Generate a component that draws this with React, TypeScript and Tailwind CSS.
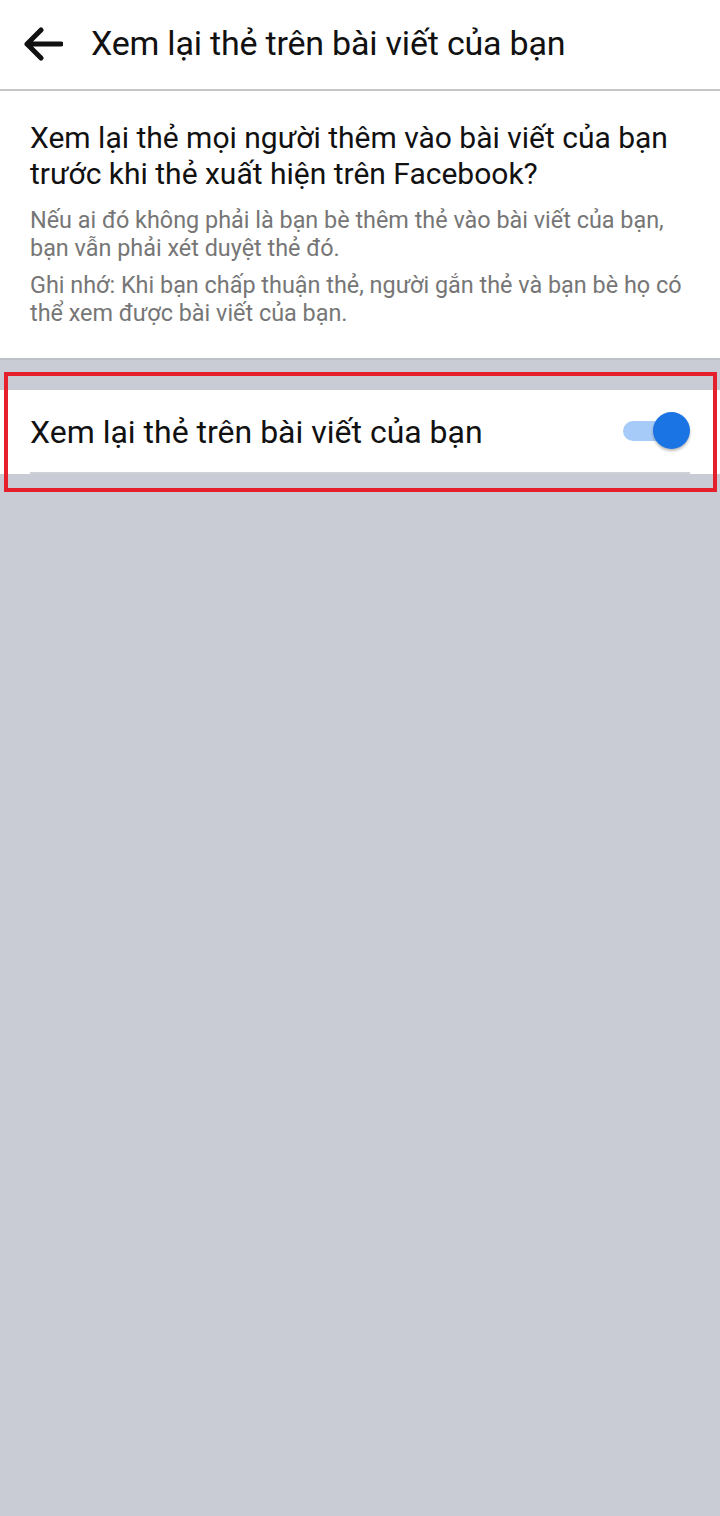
import React from "react";

const font = { fontFamily: "Roboto, 'Noto Sans', sans-serif" };

function BackArrow() {
  return (
    <svg width="40" height="36" viewBox="0 0 40 36" fill="none">
      <path
        d="M38 18H4M18 4L4 18L18 32"
        stroke="#111"
        strokeWidth="5"
        strokeLinecap="round"
        strokeLinejoin="round"
      />
    </svg>
  );
}

function Toggle() {
  return (
    <div className="relative w-[70px] h-[38px] flex items-center">
      <div className="ml-[2px] w-[52px] h-[20px] rounded-full bg-[#a7cbf8]" />
      <div className="absolute right-[1px] top-0 w-[37px] h-[37px] rounded-full bg-[#1b74e4] shadow-[0_2px_3px_rgba(0,0,0,0.28)]" />
    </div>
  );
}

export default function App() {
  return (
    <div className="relative min-h-[1516px] bg-[#c9ccd4]" style={font}>
      {/* top bar */}
      <header className="h-[91px] bg-white border-b-2 border-[#c6c6c6] flex items-center">
        <div className="ml-[23px] mt-[-2px] flex items-center">
          <BackArrow />
        </div>
        <h1 className="ml-[28px] text-[34px] leading-none text-[#111] tracking-[-0.2px] mt-[-4px]">
          Xem lại thẻ trên bài viết của bạn
        </h1>
      </header>

      {/* explanation */}
      <section className="bg-white px-[30px] pt-[29px] pb-[31px] border-b-2 border-[#bdc0c7]">
        <p className="text-[30px] leading-[36px] text-[#111]">
          Xem lại thẻ mọi người thêm vào bài viết của bạn trước khi thẻ xuất hiện trên Facebook?
        </p>
        <p className="mt-[14px] text-[23.4px] leading-[28px] text-[#767676]">
          Nếu ai đó không phải là bạn bè thêm thẻ vào bài viết của bạn, bạn vẫn phải xét duyệt thẻ đó.
        </p>
        <p className="mt-[9px] text-[23.4px] leading-[28px] text-[#767676]">
          Ghi nhớ: Khi bạn chấp thuận thẻ, người gắn thẻ và bạn bè họ có thể xem được bài viết của bạn.
        </p>
      </section>

      {/* setting row */}
      <div className="mt-[30px] bg-white">
        <div className="h-[82px] px-[30px] flex items-center justify-between">
          <span className="text-[32px] text-[#111] leading-none mt-[2px]">
            Xem lại thẻ trên bài viết của bạn
          </span>
          <div className="mr-[-1px]">
            <Toggle />
          </div>
        </div>
        <div className="mx-[30px] h-[2px] bg-[#cfd1d7]" />
      </div>

      {/* highlight frame */}
      <div className="absolute left-[4px] top-[372px] w-[713px] h-[120px] border-[4px] border-[#e3202b] pointer-events-none" />
    </div>
  );
}
